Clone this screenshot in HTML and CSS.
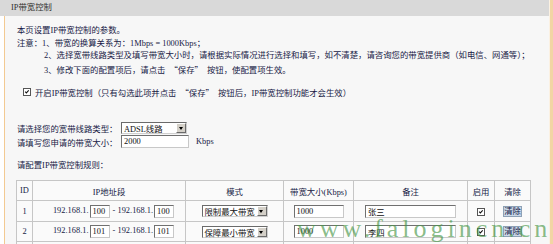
FILE: index.html
```html
<!DOCTYPE html>
<html lang="zh-CN">
<head>
    <meta charset="UTF-8">
    <meta name="viewport" content="width=device-width, initial-scale=1.0">
    <title>IP带宽控制</title>
    <link rel="stylesheet" href="styles.css">
</head>
<body>
<div class="page">
    <div class="panel">
        <div class="title">IP带宽控制</div>
        <div class="content">
            <div class="intro">
                <p>本页设置IP带宽控制的参数。</p>
                <p>注意：1、带宽的换算关系为：1Mbps = 1000Kbps；</p>
                <p class="indent">2、选择宽带线路类型及填写带宽大小时，请根据实际情况进行选择和填写，如不清楚，请咨询您的带宽提供商（如电信、网通等）；</p>
                <p class="indent">3、修改下面的配置项后，请点击<span class="q">“保存”</span>按钮，使配置项生效。</p>
            </div>

            <div class="enable">
                <span class="check"><svg viewBox="0 0 8 8"><polyline points="1.6,3.6 3.1,5.3 6.3,1.9"/></svg></span>
                开启IP带宽控制（只有勾选此项并点击<span class="q">“保存”</span>按钮后，IP带宽控制功能才会生效）
            </div>

            <div class="form-row first">
                <span class="label">请选择您的宽带线路类型：</span>
                <span class="select line-type">ADSL线路<span class="arrow"></span></span>
            </div>
            <div class="form-row">
                <span class="label">请填写您申请的带宽大小：</span>
                <input class="field total" type="text" value="2000">
                <span class="unit">Kbps</span>
            </div>

            <div class="rules-label">请配置IP带宽控制规则：</div>

            <table class="rules">
                <colgroup>
                    <col class="c-id"><col class="c-ip"><col class="c-mode"><col class="c-bw"><col class="c-note"><col class="c-on"><col class="c-del">
                </colgroup>
                <tr class="head">
                    <th>ID</th><th>IP地址段</th><th>模式</th><th>带宽大小(Kbps)</th><th>备注</th><th>启用</th><th>清除</th>
                </tr>
                <tr class="r1">
                    <td>1</td>
                    <td class="ip">192.168.1.<input class="field ip-box" type="text" value="100"> - 192.168.1.<input class="field ip-box" type="text" value="100"></td>
                    <td><span class="select mode">限制最大带宽<span class="arrow"></span></span></td>
                    <td><input class="field bw" type="text" value="1000"></td>
                    <td><input class="field note" type="text" value="张三"></td>
                    <td><span class="check"><svg viewBox="0 0 8 8"><polyline points="1.6,3.6 3.1,5.3 6.3,1.9"/></svg></span></td>
                    <td><span class="btn">清除</span></td>
                </tr>
                <tr class="r2">
                    <td>2</td>
                    <td class="ip">192.168.1.<input class="field ip-box" type="text" value="101"> - 192.168.1.<input class="field ip-box" type="text" value="101"></td>
                    <td><span class="select mode">保障最小带宽<span class="arrow"></span></span></td>
                    <td><input class="field bw" type="text" value="1000"></td>
                    <td><input class="field note" type="text" value="李四"></td>
                    <td><span class="check"><svg viewBox="0 0 8 8"><polyline points="1.6,3.6 3.1,5.3 6.3,1.9"/></svg></span></td>
                    <td><span class="btn">清除</span></td>
                </tr>
                <!-- next row starts at the bottom edge; only its top border shows -->
                <tr class="r3">
                    <td></td><td></td><td></td><td></td><td></td><td></td><td></td>
                </tr>
            </table>
        </div>
    </div>

    <div class="watermark">www.falogincn.cn</div>
</div>
</body>
</html>
```

FILE: styles.css
```css
* {
    box-sizing: border-box;
}

body {
    margin: 0;
    background: #fff;
    font-family: "Liberation Serif", "Noto Sans CJK SC", serif;
    font-size: 8.4px;
    color: #171a46;
    overflow: hidden;
}

.page {
    position: relative;
    height: 244px;
    overflow: hidden;
    border-right: 3px solid #f2d5a4;
}

.panel {
    border-right: 1px solid #fbf1e2;
}

.title {
    height: 16px;
    line-height: 16px;
    padding-left: 11px;
    background: #d9d9d9;
    color: #333;
}

.content {
    margin-left: 4px;
    height: 228px;
    padding: 9px 0 0 12px;
    border-left: 1px solid #f3ca92;
    background: #f7f7f7;
    white-space: nowrap;
}

.intro p {
    margin: 0;
    line-height: 12.5px;
}

.intro .indent {
    padding-left: 27px;
}

/* full-width quotes, as in the original CJK font */
.q {
    padding: 0 4px;
    font-family: "Noto Sans CJK SC", sans-serif;
}

/* checkbox look-alike */
.check {
    display: inline-block;
    width: 8px;
    height: 8px;
    border: 1px solid #555;
    background: #fff;
    vertical-align: middle;
}

.check svg {
    display: block;
    width: 6px;
    height: 6px;
    fill: none;
    stroke: #111;
    stroke-width: 1.4;
}

.enable {
    display: flex;
    align-items: center;
    height: 12.5px;
    margin-top: 9px;
    margin-left: 6px;
}

.enable .check {
    margin-right: 4px;
}

.form-row {
    display: flex;
    align-items: center;
    height: 14px;
}

.form-row.first {
    margin-top: 22px;
}

.form-row .label {
    width: 104px;
}

.field {
    height: 13px;
    margin: 0;
    padding: 0 2px;
    border: 1px solid #707070;
    border-right-color: #c8c8c8;
    border-bottom-color: #c8c8c8;
    background: #fff;
    font: inherit;
    color: #111;
    vertical-align: middle;
    outline: none;
}

.field.total {
    width: 68px;
}

.unit {
    margin-left: 7px;
}

.select {
    display: inline-flex;
    align-items: center;
    justify-content: space-between;
    height: 12px;
    padding-left: 2px;
    border: 1px solid #6a6a6a;
    border-right-color: #d0d0d0;
    border-bottom-color: #d0d0d0;
    background: #fff;
    color: #111;
    vertical-align: middle;
}

.select.line-type {
    width: 66px;
}

.select.mode {
    width: 66px;
}

.select .arrow {
    position: relative;
    width: 10px;
    height: 10px;
    background: #d4d0c8;
    border: 1px solid #fff;
    border-right-color: #6a6a6a;
    border-bottom-color: #6a6a6a;
}

.select .arrow::after {
    content: "";
    position: absolute;
    left: 1.5px;
    top: 3px;
    border-left: 2.5px solid transparent;
    border-right: 2.5px solid transparent;
    border-top: 3px solid #000;
}

.rules-label {
    margin-top: 11px;
    line-height: 12.5px;
}

.rules {
    margin: 8px 0 0 -1px;
    width: 514px;
    table-layout: fixed;
    border-collapse: collapse;
    background: #fafafa;
}

.rules th,
.rules td {
    padding: 0;
    border: 1px solid #c6c6c6;
    text-align: center;
    font-weight: normal;
}

.rules .head {
    height: 20px;
}

.rules .r1 {
    height: 21px;
}

.rules .r2,
.rules .r3 {
    height: 20px;
}

.c-id { width: 16px; }
.c-ip { width: 153px; }
.c-mode { width: 98px; }
.c-bw { width: 70px; }
.c-note { width: 114px; }
.c-on { width: 27px; }
.c-del { width: 36px; }

.rules td.ip {
    padding-left: 10px;
}

.field.ip-box {
    width: 20px;
    margin: 0 1px;
}

.field.bw {
    width: 50px;
}

.field.note {
    width: 91px;
}

.btn {
    display: inline-block;
    width: 19px;
    height: 11px;
    line-height: 9px;
    border: 1px solid #8ea1b5;
    background: #c9d8e8;
    color: #171a46;
    vertical-align: middle;
}

.watermark {
    position: absolute;
    left: 297px;
    top: 216px;
    font-family: "Liberation Serif", serif;
    font-size: 26px;
    line-height: 26px;
    letter-spacing: 4px;
    color: rgba(70, 150, 70, 0.65);
    white-space: nowrap;
    pointer-events: none;
}
```
